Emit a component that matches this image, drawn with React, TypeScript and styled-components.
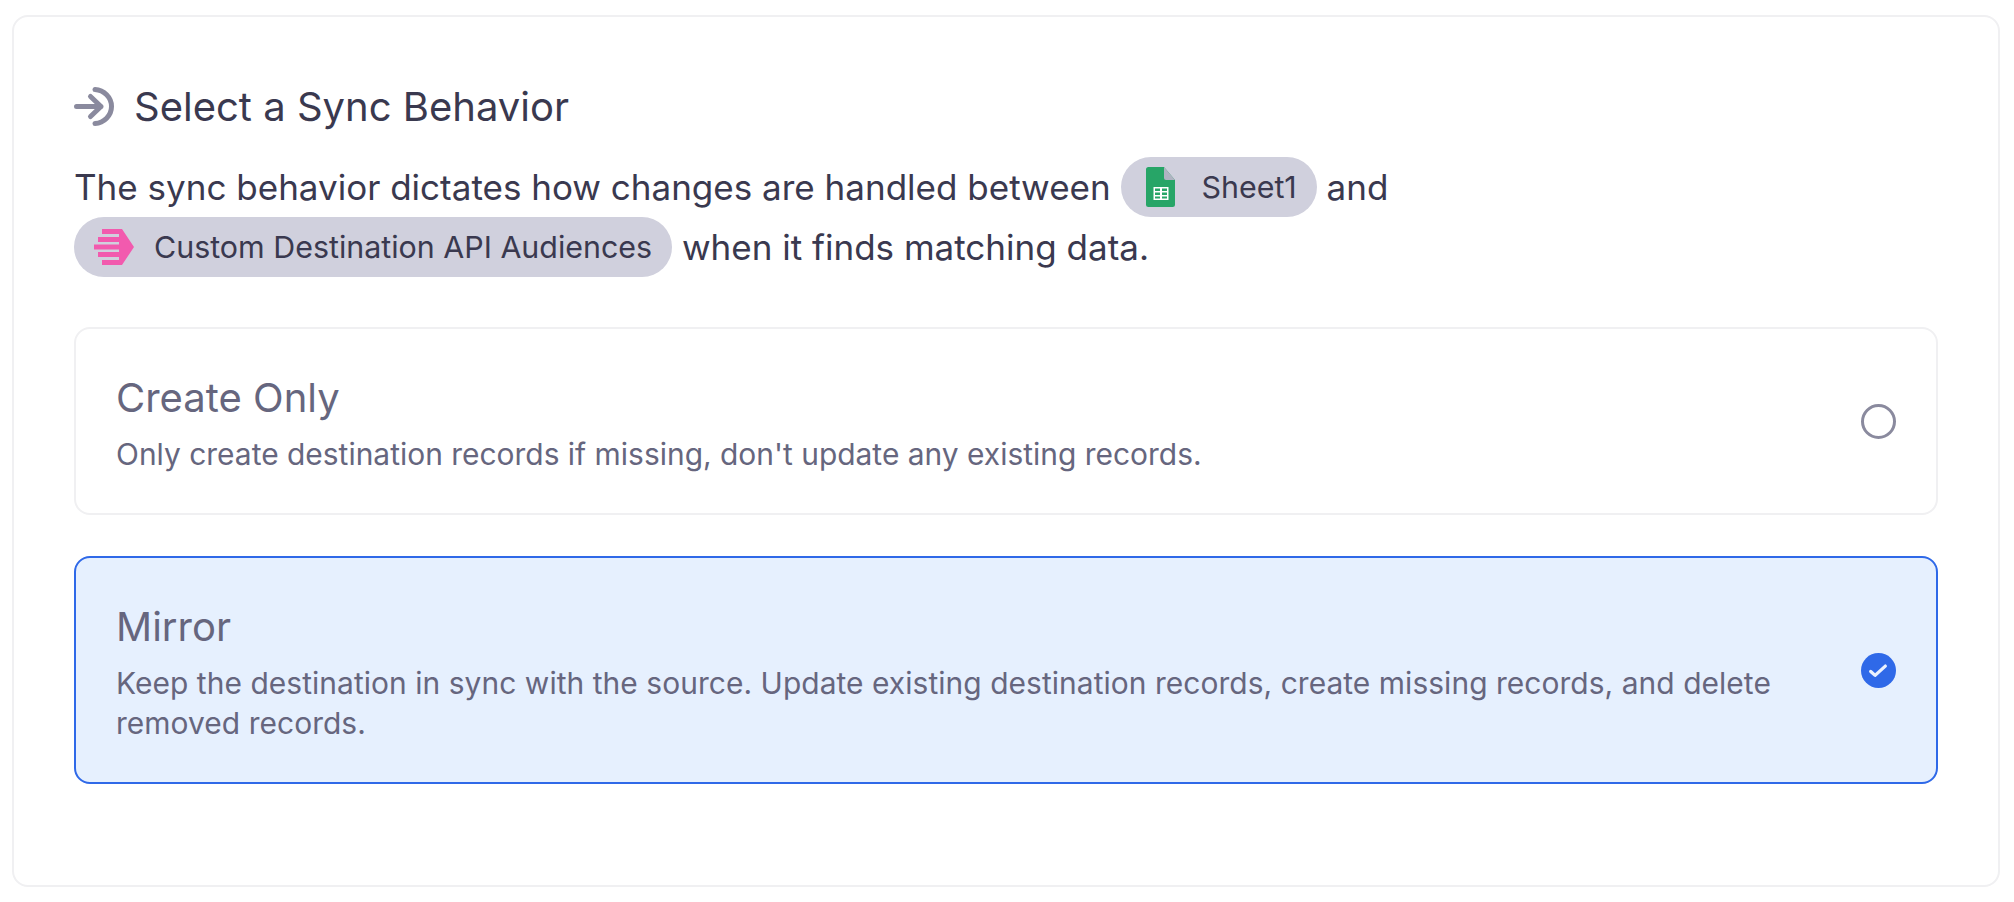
import React from 'react';
import styled, { createGlobalStyle } from 'styled-components';

const GlobalStyle = createGlobalStyle`
  html, body {
    margin: 0;
    padding: 0;
    background: #ffffff;
    font-family: Inter, "Liberation Sans", sans-serif;
  }
  * {
    box-sizing: border-box;
  }
`;

const IconSvg = styled.svg`
  flex: none;
  display: block;
`;

const SheetsIcon = () => (
  <IconSvg width="29" height="40" viewBox="0 0 29 40">
    <path d="M2.500 0H18l11 13v24.500a2.500 2.500 0 0 1-2.500 2.500h-24A2.500 2.500 0 0 1 0 37.500v-35A2.500 2.500 0 0 1 2.500 0z" fill="#27a567" />
    <path d="M18 0l11 13h-9a2 2 0 0 1-2-2z" fill="#b0b3c2" />
    <rect x="7.500" y="20" width="15" height="13" fill="#ffffff" />
    <path d="M9 21.500h5v2.500H9zM16 21.500h5v2.500h-5zM9 25.500h5V28H9zM16 25.500h5V28h-5zM9 29.500h5v2H9zM16 29.500h5v2h-5z" fill="#27a567" />
  </IconSvg>
);

const DestinationIcon = () => (
  <IconSvg width="40" height="36" viewBox="0 0 40 36">
    <path d="M8 0H28L40 18L28 36H8V31H25V28H4V23H25V20.500H0V15.500H25V13H4V8H25V5H8Z" fill="#f25aae" />
  </IconSvg>
);

const SyncIcon = () => (
  <IconSvg width="40" height="40" viewBox="0 0 40 40" fill="none" stroke="#8a8a9e" strokeWidth="5" strokeLinecap="round" strokeLinejoin="round">
    <path d="M2.500 19.500H27M16.500 9.500l10.500 10-10.500 10" />
    <path d="M21 2.500c9 .6 16.500 8 16.500 17s-7.500 16.400-16.500 17" />
  </IconSvg>
);

const CheckIcon = () => (
  <IconSvg width="35" height="35" viewBox="0 0 36 36" fill="none">
    <circle cx="18" cy="18" r="18" fill="#2f69e8" />
    <path d="M10 19l4.500 4L25 13.500" stroke="#eaf1fe" strokeWidth="3.400" strokeLinecap="round" strokeLinejoin="round" />
  </IconSvg>
);

const Page = styled.div`
  padding: 15px 14px 15px 12px;
  width: 2014px;
  height: 902px;
`;

const Panel = styled.section`
  height: 872px;
  border: 2px solid #f0f0f2;
  border-radius: 16px;
  padding: 66px 60px 0;
  background: #fff;
`;

const Header = styled.div`
  display: flex;
  align-items: center;
  gap: 20px;
  height: 48px;
`;

const Title = styled.h2`
  margin: 0;
  font-size: 40px;
  font-weight: 400;
  line-height: 48px;
  color: #3a394f;
`;

const Intro = styled.p`
  margin: 26px 0 0;
  font-size: 35.020px;
  line-height: 60px;
  color: #3a394f;
  max-width: 1500px;
`;

const Chip = styled.span<{ $inset: number; $gap: number }>`
  display: inline-flex;
  align-items: center;
  vertical-align: top;
  height: 60px;
  padding: 0 20px 0 ${({ $inset }) => $inset}px;
  gap: ${({ $gap }) => $gap}px;
  border-radius: 30px;
  background: #d0d0dd;
  font-size: 30.400px;
  color: #3a394f;
`;

const Options = styled.div`
  display: flex;
  flex-direction: column;
  gap: 41px;
  margin-top: 50px;
`;

const Option = styled.div<{ $selected?: boolean }>`
  display: flex;
  align-items: center;
  justify-content: space-between;
  gap: 60px;
  padding: 38px 40px;
  border: 2px solid ${({ $selected }) => ($selected ? '#2f69e8' : '#f0f0f2')};
  border-radius: 16px;
  background: ${({ $selected }) => ($selected ? '#e6f0fe' : '#fff')};
`;

const OptionText = styled.div`
  display: flex;
  flex-direction: column;
  gap: 12px;
  padding: 7px 0 1px;
`;

const OptionTitle = styled.div`
  font-size: 40px;
  line-height: 48px;
  color: #66667e;
`;

const OptionDescription = styled.div<{ $tracking?: number }>`
  font-size: 29.950px;
  line-height: 40px;
  letter-spacing: ${({ $tracking }) => $tracking ?? 0}px;
  color: #66667e;
`;

const Radio = styled.span`
  flex: none;
  width: 35px;
  height: 35px;
  border: 3px solid #8a8a9e;
  border-radius: 50%;
`;

const App: React.FC = () => (
  <>
    <GlobalStyle />
    <Page>
      <Panel>
        <Header>
          <SyncIcon />
          <Title>Select a Sync Behavior</Title>
        </Header>
        <Intro>
          The sync behavior dictates how changes are handled between{' '}
          <Chip $inset={25} $gap={27}><SheetsIcon />Sheet1</Chip> and{' '}
          <Chip $inset={20} $gap={20}><DestinationIcon />Custom Destination API Audiences</Chip> when it finds matching data.
        </Intro>
        <Options>
          <Option>
            <OptionText>
              <OptionTitle>Create Only</OptionTitle>
              <OptionDescription>Only create destination records if missing, don't update any existing records.</OptionDescription>
            </OptionText>
            <Radio />
          </Option>
          <Option $selected>
            <OptionText>
              <OptionTitle>Mirror</OptionTitle>
              <OptionDescription $tracking={0.05}>Keep the destination in sync with the source. Update existing destination records, create missing records, and delete removed records.</OptionDescription>
            </OptionText>
            <CheckIcon />
          </Option>
        </Options>
      </Panel>
    </Page>
  </>
);

export default App;
